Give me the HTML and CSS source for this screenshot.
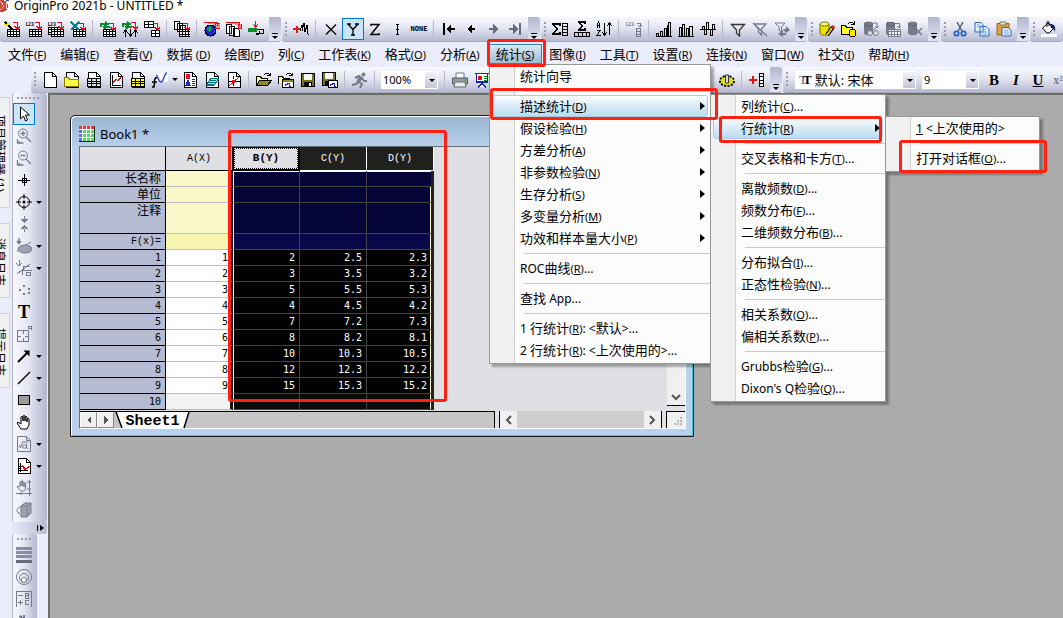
FILE: index.html
```html
<!DOCTYPE html>
<html lang="zh-CN">
<head>
<meta charset="utf-8">
<title>OriginPro 2021b - UNTITLED *</title>
<link rel="stylesheet" href="styles.css">
</head>
<body>
<svg class="defs" width="0" height="0" aria-hidden="true">
  <defs>
    <g id="grid"><path d="M0 0h13v8H0z" fill="#fff"/><path d="M.5.5h12v7H.5zM.5 2.500h12M.5 5.500h12M3.500.5v7M6.500.5v7M9.500.5v7" fill="none" stroke="currentColor"/></g>
    <path id="redarrow" d="M0 .5h4.500v5M2 4l2.500 3L7 4" fill="none" stroke="#e81010" stroke-width="1.500"/>
    <g id="page"><path d="M2.500.5h8l4 4v11h-12z" fill="#fff" stroke="currentColor"/><path d="M10.500.5v4h4" fill="none" stroke="currentColor"/></g>
    <g id="db"><path d="M1 3v9c0 3 9 3 9 0V3z" fill="currentColor"/><ellipse cx="5.500" cy="3" rx="4.500" ry="2" fill="currentColor" stroke="#555" stroke-width=".6"/></g>
    <g id="floppy"><path d="M.5.5h13v13H.5z" fill="#77751c" stroke="#000"/><path d="M3 1h8v6H3z" fill="#f5f5f5"/><path d="M3 9h8v5H3z" fill="#000"/><path d="M8 10h2v3H8z" fill="#fff"/></g>
    <g id="openfold"><path d="M.5 13.500v-9h4l1 2h6v2" fill="#ffff8a" stroke="#000"/><path d="M.5 13.500l3-5h12l-4 5z" fill="#8c8a20" stroke="#000"/><path d="M8 3c2-3 4-2 6 0m0-2.500V3h-3" fill="none" stroke="#000"/></g>
  </defs>
</svg>

<header class="titlebar">
  <svg class="logo" viewBox="0 0 9 14"><circle cx="2" cy="6" r="6" fill="#c94a3c"/><path d="M0 1l4 5-4 4M6 0l1 9" stroke="#f4c9c0" fill="none"/><path d="M6 0h3v9" stroke="#3b4a9a" fill="none"/></svg>
  <h1>OriginPro 2021b - UNTITLED *</h1>
</header>

<div class="row row-top">
  <div class="bar bar-first">
    <button class="tb"><svg viewBox="0 0 16 16"><use href="#grid" x="3" y="8"/><path d="M1 1l8 8" stroke="#000" stroke-width="1.500"/><path d="M0 3h6M3 0v6M1 6l5-5" stroke="#f0e000"/><use href="#redarrow" x="9" y="1"/></svg></button>
    <button class="tb"><svg viewBox="0 0 16 16"><text x="-1" y="5">123</text><use href="#grid" x="3" y="8"/><use href="#redarrow" x="9" y="1"/></svg></button>
    <button class="tb"><svg viewBox="0 0 16 16"><text x="-1" y="5">123</text><use href="#grid" x="0" y="6"/><use href="#grid" x="3" y="8"/><use href="#redarrow" x="9" y="1"/></svg></button>
    <button class="tb"><svg viewBox="0 0 16 16"><use href="#grid" x="3" y="8"/><path d="M1 1l8 8M9 1L1 9" stroke="#08808c" stroke-width="2"/><use href="#redarrow" x="9" y="2"/></svg></button>
    <i class="sep"></i>
    <button class="tb"><svg viewBox="0 0 16 16"><use href="#grid" x="3" y="8"/><path d="M1 6V3h6M5 1l3 2-3 2M10 6H4M6 4L4 6l2 2" stroke="#0a8a2a" fill="none" stroke-width="1.500"/><use href="#redarrow" x="9" y="2"/></svg></button>
    <button class="tb"><svg viewBox="0 0 16 16"><path d="M1 6V3h6M5 1l3 2-3 2M10 6H4M6 4L4 6l2 2" stroke="#0a8a2a" fill="none" stroke-width="1.500"/><path d="M3.500 16V9M1 12l2.500-3L6 12M8.500 8v7M6 12l2.500 3 2.500-3M13.500 16V9M11 12l2.500-3 2.500 3" stroke="#000" fill="none"/><use href="#redarrow" x="9" y="1"/></svg></button>
    <button class="tb"><svg viewBox="0 0 16 16"><path d="M.5.5h9v6h-9zM.5 3.500h9M4.500.5v6M7.500 9.500h8v6h-8zM7.500 12.500h8M11.500 9.500v6" fill="#fff" stroke="#000"/><use href="#redarrow" x="9" y="2"/></svg></button>
    <i class="sep"></i>
    <button class="tb"><svg viewBox="0 0 16 16"><path d="M.5.5h5v8h-5zM3.500 2.500h5v8h-5zM6.500 4.500h5v9h-5z" fill="#fff" stroke="#000"/><use href="#grid" x="5" y="8"/><use href="#redarrow" x="9" y="2"/></svg></button>
    <i class="sep"></i>
    <button class="tb"><svg viewBox="0 0 16 16"><circle cx="6.500" cy="9.500" r="5.500" fill="#1728c8" stroke="#000"/><path d="M3 6l4-1 1 3-3 3-2-2zM8 11l3-1-1 3z" fill="#1e9a48"/><path d="M0 1.500h13v3M11 2v5h5V3z" stroke="#e81010" fill="#e81010" fill-opacity=".4"/></svg></button>
    <button class="tb"><svg viewBox="0 0 16 16"><path d="M.5 3.500h5v9h-5zM3.500 5.500h5v9h-5zM7.500 7.500h4l2 2v6h-6z" fill="#fff" stroke="#000"/><path d="M0 1.500h13v3M12 3v4h3V3" stroke="#e81010" fill="#e81010" fill-opacity=".4"/></svg></button>
    <button class="tb"><svg viewBox="0 0 16 16"><path d="M0 7h9v4H0z" fill="#0a8a2a"/><path d="M9 8.500h6.500v4h-4V10M11 13h-3" fill="none" stroke="#000" stroke-width="1.500"/><path d="M7.500 0v6M5 3l2.500 3L10 3" fill="none" stroke="#e81010"/></svg></button>
    <b class="more"></b>
  </div>
  <div class="bar">
    <i class="grip"></i>
    <button class="tb"><svg viewBox="0 0 16 16"><path d="M0 8h7M3.500 4.500v7" stroke="#e81010" stroke-width="2"/><path d="M7 10l2-6v6l2-8 1 9 2-7 1 9 1 1" fill="none" stroke="#000"/></svg></button>
    <i class="sep"></i>
    <button class="tb"><svg class="smooth" viewBox="0 0 16 16"><path d="M3 3.500l10 10M13 3.500l-10 10" stroke="#000" stroke-width="1.300"/></svg></button>
    <button class="tb on"><svg class="smooth" viewBox="0 0 16 16"><path d="M3 3l5 5.500v5.500M13 3L8 8.500M2 3h4M10 3h4M6 14h4" fill="none" stroke="#000" stroke-width="1.300"/></svg></button>
    <button class="tb"><svg class="smooth" viewBox="0 0 16 16"><path d="M4 5V3.500h8L4 13.500h8V12" fill="none" stroke="#000" stroke-width="1.500"/></svg></button>
    <button class="tb"><svg viewBox="0 0 16 16"><path d="M8.500 3v11M7 3.500h3M7 13.500h3M7 8.500h3" stroke="#000"/></svg></button>
    <button class="tb none">NONE</button>
    <i class="sep"></i>
    <button class="tb"><svg viewBox="0 0 16 16"><path d="M3 2v12" stroke="#000" stroke-width="2"/><path d="M5 8l5-5v4h4v2h-4v4z"/></svg></button>
    <button class="tb"><svg viewBox="0 0 16 16"><path d="M4 8l5-5v4h3v2H9v4z"/></svg></button>
    <button class="tb"><svg viewBox="0 0 16 16"><path d="M13 8L8 3v4H4v2h4v4z" fill="#686b7c"/></svg></button>
    <button class="tb"><svg viewBox="0 0 16 16"><path d="M11 8L6 3v4H2v2h4v4z" fill="#686b7c"/><path d="M13 2v12" stroke="#686b7c" stroke-width="2"/></svg></button>
    <b class="more"></b>
  </div>
  <div class="bar">
    <i class="grip"></i>
    <button class="tb"><svg viewBox="0 0 16 16"><path d="M8 5V3H1l4 5-4 5h7v-2" fill="none" stroke="#000" stroke-width="1.500"/><path d="M10.500 2.500h5v12h-5zM10 5.500h6M10 8.500h6M10 11.500h6" fill="none" stroke="#000"/></svg></button>
    <button class="tb"><svg viewBox="0 0 16 16"><path d="M11 3V1H5l3 4-3 4h6V7" fill="none" stroke="#000" stroke-width="1.500"/><path d="M.5 11.500h15v4H.5zM4.500 11v4M8.500 11v4M12.500 11v4" fill="none" stroke="#000"/></svg></button>
    <button class="tb"><svg viewBox="0 0 16 16"><path d="M1.500 7V3l1-2 1 2v4M1 4.500h3M1 9.500h3l-3 5h4M8.500 2v12M6 11l2.500 3 2.500-3M13.500 14V2M11 5l2.500-3L16 5" fill="none" stroke="#000"/></svg></button>
    <i class="sep"></i>
    <button class="tb gray"><svg viewBox="0 0 16 16"><text x="-1" y="5">123</text><path d="M11 2h3v4M12 4l2 2 2-2M10.500 7.500h4v8h-4zM10 10.500h5M10 13h5" fill="none" stroke="currentColor"/></svg></button>
    <i class="sep"></i>
    <button class="tb"><svg viewBox="0 0 16 16"><path d="M.5 15v-3h2v3M4.500 15v-5h2v5M8.500 15V7h2v8M12.500 15V1h2v14M0 15.500h16M11 4v11" fill="none" stroke="#000"/></svg></button>
    <button class="tb"><svg viewBox="0 0 16 16"><path d="M1.500 15V6h2v9M4.500 15V3h2v12M8.500 15V7h2v8M11.500 15V5h3v10M0 15.500h16" fill="none" stroke="#000"/></svg></button>
    <button class="tb"><svg viewBox="0 0 16 16"><path d="M0 8.500h16M2.500 8V5h2v3M4.500 9v4h2V9M6.500 8V1h2v7M10.500 9v5h2V9M12.500 8V3h2v5" fill="none" stroke="#000"/></svg></button>
    <i class="sep"></i>
    <button class="tb"><svg class="smooth" viewBox="0 0 16 16"><path d="M1.500 3.500h13L9.500 9v6l-3-3V9z" fill="#e8eaf0" stroke="#333" stroke-width="1.300"/></svg></button>
    <button class="tb gray"><svg class="smooth" viewBox="0 0 16 16"><path d="M2 3h12L9.500 8v6l-3-3V8zM1 2l14 13" fill="none" stroke="currentColor" stroke-width="1.300"/></svg></button>
    <button class="tb gray"><svg class="smooth" viewBox="0 0 16 16"><path d="M1 2h10L7.500 6v5L5 9V6z" fill="none" stroke="currentColor"/><path d="M9 8h3V5l4 4-4 3zM12 12H9V9l-5 4 5 3v-2h3z" fill="currentColor"/></svg></button>
    <b class="more"></b>
  </div>
  <div class="bar">
    <i class="grip"></i>
    <button class="tb yellow"><svg class="smooth" viewBox="0 0 16 16"><path d="M1 3v9c0 3 9 3 9 0V3z" fill="#f0e000" stroke="#77700a"/><ellipse cx="5.500" cy="3" rx="4.500" ry="2" fill="#ffff80" stroke="#77700a"/><path d="M8 14l6-8" stroke="#000" stroke-width="4"/><path d="M8 14l5-7" stroke="#f5d400" stroke-width="2"/><path d="M13 7l2-2" stroke="#c22" stroke-width="3"/></svg></button>
    <button class="tb"><svg viewBox="0 0 16 16"><path d="M.5 13V4.500h4l1 2h6V9l-3 4z" fill="#ffff30" stroke="#000"/><path d="M7 3c2-3 4-2 6 0M13.500 0v3.500H10" fill="none" stroke="#000"/><path d="M8.500 10v4c0 2 6 2 6 0v-4c0-2-6-2-6 0" fill="#ffe800" stroke="#000"/></svg></button>
    <button class="tb gray"><svg class="smooth" viewBox="0 0 16 16"><use href="#db"/><path d="M10 2h4v5M12 5l2 2 2-2M10 9l3-2" fill="none" stroke="currentColor"/><circle cx="7" cy="12" r="2.500" fill="#ddd" stroke="currentColor"/><circle cx="13" cy="12" r="2.500" fill="#ddd" stroke="currentColor"/></svg></button>
    <button class="tb gray"><svg viewBox="0 0 16 16"><use href="#db"/><path d="M10 2h4v5M12 5l2 2 2-2" fill="none" stroke="currentColor"/><use href="#grid" x="3" y="8"/></svg></button>
    <button class="tb gray"><svg class="smooth" viewBox="0 0 16 16"><use href="#db"/><path d="M8 7l7 7M15 7l-7 7" fill="none" stroke="currentColor" stroke-width="1.500"/></svg></button>
    <b class="more"></b>
  </div>
  <div class="bar">
    <i class="grip"></i>
    <button class="tb"><svg class="smooth" viewBox="0 0 16 16"><path d="M5 1l5 9M11 1L6 10" stroke="#51606f" stroke-width="1.500"/><g fill="none" stroke="#2768c8" stroke-width="1.800"><circle cx="4.500" cy="12.500" r="2.200"/><circle cx="11.500" cy="12.500" r="2.200"/></g></svg></button>
    <button class="tb"><svg class="smooth" viewBox="0 0 16 16"><path d="M1 1.500h6l2 2V11H1zM6 5.500h6l3 3V15H6z" fill="#e4effc" stroke="#2e68b4"/><path d="M3 4h3M3 6h3M8 9h4M8 11h5M8 13h5" stroke="#76a4dc"/></svg></button>
    <button class="tb"><svg class="smooth" viewBox="0 0 16 16"><path d="M1 2.500h12V14H1z" fill="#dca23c" stroke="#9c6712"/><path d="M4 1h6v3H4z" fill="#eee2b8" stroke="#777"/><path d="M6 6.500h6l3 3V15H6z" fill="#eaf2fc" stroke="#2e68b4"/><path d="M8 9h4M8 11h5M8 13h5" stroke="#76a4dc"/></svg></button>
    <b class="more"></b>
  </div>
  <div class="bar bar-last">
    <i class="grip"></i>
    <button class="tb"><svg class="smooth" viewBox="0 0 16 16"><path d="M1.500 7L7 2l6 5-5 5H6z" fill="#fff" stroke="#000"/><path d="M6 6V1.500C6-.5 8-.5 8 1.500V5" fill="none" stroke="#000"/><path d="M9 3c4 0 6 2 5 8-1-3-2-4-4-4z" fill="#12205c"/><path d="M0 13h16v3H0z" fill="#fff"/></svg></button>
  </div>
</div>

<nav class="menubar">
  <button>文件<small>(<u>F</u>)</small></button><button>编辑<small>(<u>E</u>)</small></button><button>查看<small>(<u>V</u>)</small></button><button>数据 <small>(<u>D</u>)</small></button><button>绘图<small>(<u>P</u>)</small></button><button>列<small>(<u>C</u>)</small></button><button>工作表<small>(<u>K</u>)</small></button><button>格式<small>(<u>O</u>)</small></button><button>分析<small>(<u>A</u>)</small></button><button class="open">统计<small>(<u>S</u>)</small></button><button>图像<small>(<u>I</u>)</small></button><button>工具<small>(<u>T</u>)</small></button><button>设置<small>(<u>R</u>)</small></button><button>连接<small>(<u>N</u>)</small></button><button>窗口<small>(<u>W</u>)</small></button><button>社交<small>(<u>I</u>)</small></button><button>帮助<small>(<u>H</u>)</small></button>
</nav>

<div class="row row-second">
  <div class="bar">
    <i class="grip"></i>
    <button class="tb"><svg viewBox="0 0 16 16"><use href="#page"/></svg></button>
    <button class="tb"><svg viewBox="0 0 16 16"><use href="#page"/><path d="M.5 14.500v-9h4l1 2h9v7z" fill="#ffff40" stroke="#8a7a00"/></svg></button>
    <button class="tb"><svg viewBox="0 0 16 16"><use href="#page"/><path d="M1 6h14v9H1z"/><path d="M2 7h3v2H2zM6 7h4v2H6zM11 7h3v2h-3zM2 10h3v1H2zM6 10h4v1H6zM11 10h3v1h-3zM2 12h3v2H2zM6 12h4v2H6zM11 12h3v2h-3z" fill="#ddd"/></svg></button>
    <button class="tb"><svg viewBox="0 0 16 16"><use href="#page"/><path d="M4.500 3v10H13" stroke="#000" fill="none"/><path d="M5 11l3-4 2 2 3-4" stroke="#e81010" fill="none" stroke-width="1.300"/></svg></button>
    <button class="tb"><svg viewBox="0 0 16 16"><use href="#page"/><path d="M1 6h14v9H1z"/><path d="M2 7h3v2H2zM6 7h4v2H6zM11 7h3v2h-3zM2 10h3v1H2zM6 10h4v1H6zM11 10h3v1h-3zM2 12h3v2H2zM6 12h4v2H6zM11 12h3v2h-3z" fill="#ffff20"/></svg></button>
    <button class="tb"><svg class="smooth" viewBox="0 0 16 16"><path d="M3 1h13v9H3z" fill="#fff"/><path d="M4 3c2 0 2 7 5 7s3-9 6-9" stroke="#3448d8" stroke-width="1.500" fill="none"/><path d="M5 6c-3-1-2 3-3 9H0M0 10h5" stroke="#000" stroke-width="1.500" fill="none"/></svg></button>
    <i class="drop"></i>
    <button class="tb"><svg viewBox="0 0 16 16"><use href="#page"/><path d="M4 2h4v5H4z" fill="#e81010"/><path d="M4 13l2-5 2 5zM10 7h3M10 9h3M10 11h3M10 13h3" stroke="#1728c8" fill="#1728c8"/></svg></button>
    <button class="tb"><svg viewBox="0 0 16 16"><use href="#page"/><path d="M3 12l4-6h8l-4 6z" fill="#8fe8f0" stroke="#06717c"/><path d="M6 8h6M5 10h6M3 13.500h7" stroke="#06717c"/></svg></button>
    <button class="tb"><svg viewBox="0 0 16 16"><use href="#page"/><path d="M3 9.500h3M9 9.500h5M7.500 4v3M7.500 11v3" stroke="#000"/><path d="M3 14L13 5" stroke="#e81010"/><circle cx="7.500" cy="9.500" r="1.500" fill="#e81010"/></svg></button>
    <i class="sep"></i>
    <button class="tb"><svg viewBox="0 0 16 16"><use href="#openfold"/></svg></button>
    <button class="tb"><svg viewBox="0 0 16 16"><path d="M.5 12V4.500h4l1 2h6" fill="#ffff8a" stroke="#000"/><path d="M8 3c2-3 4-2 6 0m0-2.500V3h-3" fill="none" stroke="#000"/><path d="M4.500 7.500h11v8h-11z" fill="#fff" stroke="#000"/><path d="M5 8h10v2H5z" fill="#8c8a20"/><path d="M7 14v-2h2v-1h2v3h2" stroke="#22c" fill="none"/></svg></button>
    <button class="tb"><svg viewBox="0 0 16 16"><use href="#floppy" x="1" y="1"/></svg></button>
    <button class="tb"><svg viewBox="0 0 16 16"><use href="#floppy"/><path d="M6.500 8.500h9v7h-9z" fill="#fff" stroke="#000"/><path d="M8 14v-2h2v-1h2v3h2" stroke="#22c" fill="none"/></svg></button>
    <i class="sep"></i>
    <button class="tb gray"><svg class="smooth" viewBox="0 0 16 16"><circle cx="11.500" cy="2.500" r="2" fill="currentColor"/><path d="M3 6l4-2 3 2-3 4 3 2-2 4M7 10l-3 2-4 1M10 6l2 3h3M8 5l-3 5" stroke="currentColor" stroke-width="2" fill="none"/></svg></button>
    <i class="sep"></i>
    <label class="combo combo-zoom"><select aria-label="缩放"><option>100%</option></select></label>
    <i class="sep"></i>
    <button class="tb"><svg class="smooth" viewBox="0 0 16 16"><path d="M4 6V1h8v5" fill="#fff" stroke="#777"/><path d="M.5 6h15v6H.5z" fill="#999da5" stroke="#555"/><path d="M3 10h10l1 5H2z" fill="#eee" stroke="#666"/><path d="M12 8h2" stroke="#2a2"/></svg></button>
    <button class="tb"><svg viewBox="0 0 16 16"><path d="M1 1.500h14M2.500 2v8h11V2M8 10v3M4 15l4-3 4 3" fill="#fff" stroke="#1728a8" stroke-width="1.500"/><circle cx="6" cy="6" r="2.500" fill="#e81010"/><path d="M10 4h3M10 6h3M10 8h3" stroke="#0a8a2a"/></svg></button>
    <span class="covered"></span>
    <button class="tb"><svg class="smooth" viewBox="0 0 16 16"><ellipse cx="8" cy="9" rx="7" ry="5" fill="#e6d81c" stroke="#000" stroke-dasharray="2 1.400" stroke-width="2"/><ellipse cx="8" cy="9" rx="6" ry="4" fill="#e6d81c"/><path d="M6.500 3h3v8h-3z" fill="#ddd" stroke="#333"/></svg></button>
    <i class="sep"></i>
    <button class="tb"><svg viewBox="0 0 16 16"><path d="M0 8h8M4 4v8" stroke="#e81010" stroke-width="2"/><path d="M10.500 1.500h4v13h-4zM10 4.500h5M10 8h5M10 11.500h5" fill="#fff" stroke="#000"/></svg></button>
    <b class="more"></b>
  </div>
  <div class="bar bar-last">
    <i class="grip"></i>
    <label class="combo combo-font"><span class="tt"><s>T</s>T</span><select aria-label="字体"><option>默认: 宋体</option></select></label>
    <label class="combo combo-size"><select aria-label="字号"><option>9</option></select></label>
    <button class="tb fmt"><b>B</b></button>
    <button class="tb fmt"><em>I</em></button>
    <button class="tb fmt"><u>U</u></button>
    <button class="tb fmt sup">x²</button>
  </div>
</div>

<div class="workspace">
  <aside class="dock">
    <button class="dock-tab tall"><span>项目管理器 (1)</span></button>
    <button class="dock-tab"><span>消息日志</span></button>
    <button class="dock-tab"><span>提示日志</span></button>
  </aside>
  <aside class="tools">
    <div class="toolcol">
      <i class="hgrip"></i>
      <div class="tool"><button class="tb on"><svg class="smooth" viewBox="0 0 16 16"><path d="M4.500 1v12l3-3 2 5 2-1-2-5h4z" fill="#fff" stroke="#000"/></svg></button></div>
      <div class="tool"><button class="tb gray"><svg class="smooth" viewBox="0 0 16 16"><circle cx="7" cy="5.500" r="4.500" fill="none" stroke="currentColor"/><path d="M7 3v5M4.500 5.500h5M10 9l5 5M1.500 11v4h6M3.500 13v2" stroke="currentColor" fill="none" stroke-width="1.300"/></svg></button></div>
      <div class="tool"><button class="tb gray"><svg class="smooth" viewBox="0 0 16 16"><circle cx="7" cy="5.500" r="4.500" fill="none" stroke="currentColor"/><path d="M4.500 5.500h5M10 9l5 5M1.500 10v5h6M3.500 13v2" stroke="currentColor" fill="none" stroke-width="1.300"/></svg></button></div>
      <div class="tool"><button class="tb"><svg viewBox="0 0 16 16"><path d="M8.500 2v12M2 8.500h12M6.500 6.500h4v4h-4z" fill="none" stroke="#000"/></svg></button></div>
      <div class="tool"><button class="tb"><svg class="smooth" viewBox="0 0 16 16"><circle cx="8" cy="8" r="5.500" fill="none" stroke="#000"/><circle cx="8" cy="8" r="1.500"/><path d="M8 0v5M8 11v5M0 8h5M11 8h5" stroke="#000"/></svg></button><i class="drop"></i></div>
      <div class="tool"><button class="tb gray"><svg viewBox="0 0 16 16"><path d="M5 3h7L8.500 7zM5 13h7L8.500 9zM8 0h1v4H8zM8 12h1v4H8z" fill="currentColor"/></svg></button></div>
      <div class="tool"><button class="tb gray"><svg class="smooth" viewBox="0 0 16 16"><path d="M1 14C4 9 8 8 15 4" stroke="currentColor" fill="none"/><ellipse cx="9" cy="11" rx="7" ry="4" fill="#9da1b2" stroke="currentColor"/><path d="M3 0v5M1 3l2 2.500L5 3" fill="none" stroke="currentColor" stroke-width="1.500"/></svg></button><i class="drop"></i></div>
      <div class="tool"><button class="tb gray"><svg viewBox="0 0 16 16"><path d="M3 0v5M0 3l3 3 3-3M1 14L14 4M6.500 15v-5h9M7 9V6h6M10 12h4v3h-4z" fill="none" stroke="currentColor"/></svg></button><i class="drop"></i></div>
      <div class="tool"><button class="tb gray"><svg viewBox="0 0 16 16"><path d="M7 3h2v2H7zM3 7h2v2H3zM12 6h2v2h-2zM12 10h2v2h-2zM7 11h2v2H7z" fill="currentColor"/></svg></button></div>
      <div class="tool"><button class="tb text-tool">T</button></div>
      <div class="tool"><button class="tb gray"><svg viewBox="0 0 16 16"><path d="M1.500 4.500h11v11h-11zM7 4v4M7 12v4M1 10h4M9 10h4M12.500 3V.5h3V4M12 2.500h4" fill="none" stroke="currentColor"/></svg></button></div>
      <div class="tool"><button class="tb"><svg class="smooth" viewBox="0 0 16 16"><path d="M2 14L11 5" stroke="#000" stroke-width="2"/><path d="M13.500 2.500v6l-6-6z"/></svg></button><i class="drop"></i></div>
      <div class="tool"><button class="tb"><svg class="smooth" viewBox="0 0 16 16"><path d="M2 14L14 2" stroke="#000" stroke-width="1.500"/></svg></button><i class="drop"></i></div>
      <div class="tool"><button class="tb"><svg viewBox="0 0 16 16"><path d="M2.500 3.500h11v9h-11z" fill="#9b9b9b" stroke="#000"/></svg></button><i class="drop"></i></div>
      <div class="tool"><button class="tb"><svg class="smooth" viewBox="0 0 16 16"><path d="M5 15L1 9l1-1 3 2V3q1-1 2 0v4-5q1-1 2 0v5-4q1-1 2 0v5-3q1-1 2 0v6l-2 4z" fill="#fff" stroke="#000"/></svg></button></div>
      <div class="tool"><button class="tb gray"><svg class="smooth" viewBox="0 0 16 16"><path d="M1.500.5h9l4 4v11h-13zM10.500.5v4h4M3 9l1.500 3 2-6h6" fill="none" stroke="currentColor"/><circle cx="8.500" cy="10.500" r="1.800" fill="none" stroke="currentColor"/><path d="M10.500 8v4l1.500.5" fill="none" stroke="currentColor"/></svg></button><i class="drop"></i></div>
      <div class="tool"><button class="tb"><svg viewBox="0 0 16 16"><use href="#page"/><path d="M4.500 5v9M3 12.500h9M4 8H2M4 10H2" stroke="#000"/><path d="M5 9q2-2 3 1t5-2" stroke="#e81010" fill="none" stroke-width="1.500"/></svg></button><i class="drop"></i></div>
      <div class="tool"><button class="tb gray"><svg class="smooth" viewBox="0 0 16 16"><path d="M5 11L1 7l1-1 2 1V2h1v4-5h1.500v5-4H8v5-4h1.500v6L8 11zM13.500 0v16M0 13.500h16M11 2h4M11 9h4M5 12v3" fill="none" stroke="currentColor"/></svg></button></div>
      <div class="tool"><button class="tb gray"><svg class="smooth" viewBox="0 0 16 16"><path d="M5 4l4-3h6v10l-4 4H5z" fill="#9da1b2" stroke="currentColor"/><path d="M5 4h6v11M11 4l4-3M4 5C0 7 0 10 4 12M2 10l2 2" fill="none" stroke="currentColor"/></svg></button></div>
    </div>
    <div class="tools-more"></div>
    <div class="toolcol narrow">
      <i class="hgrip"></i>
      <div class="tool"><button class="tb"><svg viewBox="0 0 16 16"><path d="M0 1.500h16M0 5.500h16M0 9.500h16" stroke="#8a8da0" stroke-width="3"/><path d="M0 14h16" stroke="#686b7c" stroke-width="3"/></svg></button></div>
      <div class="tool"><button class="tb gray"><svg class="smooth" viewBox="0 0 16 16"><circle cx="8" cy="8" r="7.500" fill="none" stroke="currentColor"/><circle cx="8" cy="9" r="4.500" fill="none" stroke="currentColor"/><circle cx="8" cy="11" r="2.500" fill="#fff" stroke="currentColor"/></svg></button></div>
      <div class="tool"><button class="tb gray"><svg viewBox="0 0 16 16"><path d="M.5 0v16M0 .5h16M15.500 0v16M2 4.500h5M2 11.500h5M4.500 9v5M9.500 2v5h3V2zM9 4.500h4M13 9.500H9.500v4H13" fill="none" stroke="currentColor"/></svg></button></div>
      <div class="tool"><button class="tb gray"><svg viewBox="0 0 16 16"><path d="M8 2v12M2 6.500h12M4 3l8 8" stroke="currentColor" stroke-width="1.500"/></svg></button></div>
    </div>
  </aside>

  <main class="mdi">
    <section class="book">
      <h2 class="book-title">
        <svg viewBox="0 0 16 16"><path d="M0 0h16v16H0z" fill="#222"/><path d="M0 0h15v15H0z" fill="#fff"/><path d="M0 0h15v4H0z" fill="#f03040"/><path d="M0 4h4v11H0z" fill="#5a70e8"/><path d="M4 4h11v11H4z" fill="#50dc68"/><path d="M3.500 0v15M7.500 0v15M11.500 0v15M0 3.500h15M0 7.500h15M0 11.500h15" stroke="#fff"/></svg>
        Book1 *
      </h2>
      <div class="client">
        <div class="sheet-area">
          <div class="sheet-clip">
            <table class="sheet">
              <colgroup><col class="c-head"><col class="c-data"><col class="c-data"><col class="c-data"><col class="c-data"></colgroup>
              <thead><tr><th></th><th>A(X)</th><th class="active"><span>B(Y)</span></th><th class="sel">C(Y)</th><th class="sel">D(Y)</th></tr></thead>
              <tbody>
                <tr class="meta first"><th>长名称</th><td></td><td></td><td></td><td></td></tr>
                <tr class="meta"><th>单位</th><td></td><td></td><td></td><td></td></tr>
                <tr class="meta note"><th>注释</th><td></td><td></td><td></td><td></td></tr>
                <tr class="meta fx"><th>F(x)=</th><td></td><td></td><td></td><td></td></tr>
                <tr><th>1</th><td>1</td><td>2</td><td>2.5</td><td>2.3</td></tr>
                <tr><th>2</th><td>2</td><td>3</td><td>3.5</td><td>3.2</td></tr>
                <tr><th>3</th><td>3</td><td>5</td><td>5.5</td><td>5.3</td></tr>
                <tr><th>4</th><td>4</td><td>4</td><td>4.5</td><td>4.2</td></tr>
                <tr><th>5</th><td>5</td><td>7</td><td>7.2</td><td>7.3</td></tr>
                <tr><th>6</th><td>6</td><td>8</td><td>8.2</td><td>8.1</td></tr>
                <tr><th>7</th><td>7</td><td>10</td><td>10.3</td><td>10.5</td></tr>
                <tr><th>8</th><td>8</td><td>12</td><td>12.3</td><td>12.2</td></tr>
                <tr><th>9</th><td>9</td><td>15</td><td>15.3</td><td>15.2</td></tr>
                <tr class="blank"><th>10</th><td></td><td></td><td></td><td></td></tr>
              </tbody>
            </table>
          </div>
          <div class="vscroll"><svg viewBox="0 0 10 8"><path d="M1 2l4 4 4-4" fill="none" stroke="#555" stroke-width="2"/></svg></div>
        </div>
        <div class="bottom">
          <div class="tabs">
            <button class="nav" aria-label="上一个"><svg viewBox="0 0 6 8"><path d="M5 0v8L1 4z" fill="#555"/></svg></button>
            <button class="nav" aria-label="下一个"><svg viewBox="0 0 6 8"><path d="M1 0v8l4-4z" fill="#555"/></svg></button>
            <div class="tab"><svg viewBox="0 0 75 16"><path d="M1 0l6 16h62l5-16z" fill="#fff"/><path d="M1 0l6 16M69 16l5-16" stroke="#000" stroke-width="1.500" fill="none"/></svg><button>Sheet1</button></div>
          </div>
          <div class="hscroll"><svg viewBox="0 0 8 10"><path d="M6 1L2 5l4 4" fill="none" stroke="#555" stroke-width="2"/></svg><i></i><svg viewBox="0 0 8 10"><path d="M2 1l4 4-4 4" fill="none" stroke="#555" stroke-width="2"/></svg></div>
          <div class="corner"><svg viewBox="0 0 9 9"><path d="M6 0h2v2H6zM3 3h2v2H3zM6 3h2v2H6zM0 6h2v2H0zM3 6h2v2H3zM6 6h2v2H6z" fill="#b8b8b8"/></svg></div>
        </div>
      </div>
    </section>
  </main>
</div>

<div class="menu menu-stat" role="menu">
  <button>统计向导</button>
  <hr>
  <button class="hot sub">描述统计<small>(<u>D</u>)</small></button>
  <button class="sub">假设检验<small>(<u>H</u>)</small></button>
  <button class="sub">方差分析<small>(<u>A</u>)</small></button>
  <button class="sub">非参数检验<small>(<u>N</u>)</small></button>
  <button class="sub">生存分析<small>(<u>S</u>)</small></button>
  <button class="sub">多变量分析<small>(<u>M</u>)</small></button>
  <button class="sub">功效和样本量大小<small>(<u>P</u>)</small></button>
  <hr>
  <button><span>ROC</span>曲线<small>(<u>R</u>)</small><span>...</span></button>
  <hr>
  <button>查找<span>&nbsp;App...</span></button>
  <hr>
  <button><span>1&nbsp;</span>行统计<small>(<u>R</u>)</small><span>: &lt;</span>默认<span>&gt;...</span></button>
  <button><span>2&nbsp;</span>行统计<small>(<u>R</u>)</small><span>: &lt;</span>上次使用的<span>&gt;...</span></button>
</div>

<div class="menu menu-desc" role="menu">
  <button>列统计<small>(<u>C</u>)</small><span>...</span></button>
  <button class="hot sub">行统计<small>(<u>R</u>)</small></button>
  <hr>
  <button>交叉表格和卡方<small>(<u>T</u>)</small><span>...</span></button>
  <hr>
  <button>离散频数<small>(<u>D</u>)</small><span>...</span></button>
  <button>频数分布<small>(<u>F</u>)</small><span>...</span></button>
  <button>二维频数分布<small>(<u>B</u>)</small><span>...</span></button>
  <hr>
  <button>分布拟合<small>(<u>I</u>)</small><span>...</span></button>
  <button>正态性检验<small>(<u>N</u>)</small><span>...</span></button>
  <hr>
  <button>相关系数<small>(<u>O</u>)</small><span>...</span></button>
  <button>偏相关系数<small>(<u>P</u>)</small><span>...</span></button>
  <hr>
  <button><span>Grubbs</span>检验<small>(<u>G</u>)</small><span>...</span></button>
  <button><span>Dixon's Q</span>检验<small>(<u>Q</u>)</small><span>...</span></button>
</div>

<div class="menu menu-rows" role="menu">
  <button><span><u>1</u> &lt;</span>上次使用的<span>&gt;</span></button>
  <hr>
  <button>打开对话框<small>(<u>O</u>)</small><span>...</span></button>
</div>

<i class="mark mark-menu"></i>
<i class="mark mark-desc"></i>
<i class="mark mark-row"></i>
<i class="mark mark-dialog"></i>
<i class="mark mark-data"></i>
</body>
</html>
```
FILE: styles.css
```css
* { box-sizing: border-box; }

body {
  margin: 0;
  height: 100vh;
  overflow: hidden;
  position: relative;
  display: flex;
  flex-direction: column;
  background: #ebedfb;
  color: #000;
  font: 13px/16px "Noto Sans", "Noto Sans CJK SC", sans-serif;
}

button {
  margin: 0;
  padding: 0;
  border: 0;
  background: none;
  color: inherit;
  font: inherit;
}

svg { display: block; shape-rendering: crispEdges; }
svg text { font: bold 5px "DejaVu Sans Mono", monospace; fill: currentColor; }
.smooth { shape-rendering: auto; }
.defs { position: absolute; }

/* Title */
.titlebar {
  display: flex;
  flex: none;
  height: 17px;
  background: #fff;
}
.logo { width: 9px; height: 14px; margin-right: 5px; }
.titlebar h1 {
  margin: 0;
  font: 12px/12px "Noto Sans", sans-serif;
  white-space: nowrap;
}

/* Toolbars */
.row { display: flex; flex: none; gap: 1px; overflow: hidden; }
.row-top { height: 25px; }
.row-second { height: 26px; padding-left: 31px; }

.bar {
  display: flex;
  flex: none;
  align-items: center;
  height: 100%;
  border-bottom: 1px solid #a9abc4;
  border-radius: 3px;
  background: linear-gradient(#f8f9fe, #e4e6f2 45%, #b7b9d0);
}
.bar-first { padding-left: 1px; }
.bar-last { flex: 1 0 auto; }

.tb {
  display: flex;
  flex: none;
  align-items: center;
  justify-content: center;
  width: 22px;
  height: 22px;
}
.row-second .tb { height: 23px; padding-top: 1px; }
.tb svg { width: 16px; height: 16px; }
.tb.on { border: 1px solid #0078d7; background: #cce4f7; }
.gray { color: #777a8c; }
.none { font: bold 7px/8px "DejaVu Sans Mono", monospace; }

.grip {
  flex: none;
  width: 2px;
  height: 15px;
  margin: 0 3px;
  background: repeating-linear-gradient(#9a9cab 0 2px, transparent 2px 4px);
}
.sep {
  flex: none;
  width: 1px;
  height: 18px;
  margin: 0 4px 0 3px;
  background: #b9bac6;
}
.more {
  position: relative;
  flex: none;
  align-self: stretch;
  width: 12px;
  margin-left: 2px;
  border-radius: 0 3px 3px 0;
  background: linear-gradient(#b4b6cf, #e4e6f4);
}
.more::before, .more::after {
  content: "";
  position: absolute;
  left: 3px;
  bottom: 7px;
  width: 6px;
  height: 1px;
  background: #000;
}
.more::after {
  bottom: 2px;
  width: 0;
  height: 0;
  border: 3px solid transparent;
  border-bottom: 0;
  border-top-color: #000;
  background: none;
}
.drop {
  flex: none;
  width: 0;
  border: 3px solid transparent;
  border-top-color: #000;
  border-bottom: 0;
  margin: 0 1px;
}
.covered { flex: none; width: 223px; align-self: stretch; }

.combo {
  position: relative;
  display: flex;
  flex: none;
  align-items: center;
  height: 18px;
  background: #fff;
}
.combo::after {
  content: "";
  position: absolute;
  right: 3px;
  top: 8px;
  border: 3px solid transparent;
  border-top-color: #000;
  border-bottom: 0;
  pointer-events: none;
}
.combo select {
  flex: 1;
  min-width: 0;
  height: 16px;
  margin: 0 1px 0 0;
  padding: 0 12px 0 2px;
  border: 0;
  appearance: none;
  background: linear-gradient(#f2f3f8, #c3c5d8) right / 12px 100% no-repeat #fff;
  color: #000;
  font: 11px/16px "Noto Sans", "Noto Sans CJK SC", sans-serif;
}
.combo-zoom { width: 57px; margin: 0 3px 0 2px; }
.combo-font { width: 121px; margin: 0 6px 0 4px; }
.combo-font select { padding-left: 0; font-size: 13px; }
.combo-size { width: 57px; margin-right: 4px; }
.tt {
  margin: 0 3px 0 4px;
  font: bold 13px/16px "Liberation Serif", serif;
}
.tt s { margin-right: -4px; color: #888; font-size: 12px; text-decoration: none; }
.fmt { font: bold 15px/18px "Liberation Serif", serif; }
.sup { width: 18px; color: #777a8c; font-size: 12px; }

/* Menu bar */
.menubar {
  display: flex;
  flex: none;
  align-items: flex-start;
  height: 25px;
  padding: 2px 0 0 1px;
}
.menubar button {
  flex: none;
  height: 20px;
  padding: 0 7px;
  line-height: 20px;
  white-space: nowrap;
}
.menubar .open {
  margin-left: 1px;
  border: 1px solid #3c7fb1;
  padding: 0 7px;
  background: linear-gradient(#dbe9f3, #9dbdd3);
  line-height: 18px;
}
small { font-size: 11px; }
u { text-underline-offset: 1px; }

/* Workspace */
.workspace { display: flex; flex: 1; min-height: 0; }

.dock {
  display: flex;
  flex: none;
  flex-direction: column;
  gap: 15px;
  width: 12px;
  padding-top: 4px;
  overflow: hidden;
}
.dock-tab {
  display: flex;
  flex: none;
  justify-content: flex-end;
  width: 10px;
  height: 75px;
  padding: 3px 4px 0 0;
  border: 1px solid #d2d2d8;
  border-left: 0;
  background: #f1f1f2;
  overflow: hidden;
}
.dock-tab.tall { height: 111px; }
.dock-tab span {
  writing-mode: vertical-rl;
  text-orientation: sideways;
  font-size: 12px;
  line-height: 12px;
  white-space: nowrap;
}

.tools {
  display: flex;
  flex: none;
  flex-direction: column;
  align-items: flex-start;
  width: 36px;
  overflow: hidden;
}
.toolcol {
  flex: none;
  width: 35px;
  padding-bottom: 1px;
  border-left: 1px solid #b3b5ca;
  border-radius: 3px;
  background: linear-gradient(90deg, #f8f9fe, #e4e6f2 45%, #b4b6ce);
}
.narrow { width: 25px; }
.tool { display: flex; align-items: center; height: 22px; }
.hgrip {
  display: block;
  width: 22px;
  height: 2px;
  margin: 4px;
  background: repeating-linear-gradient(90deg, #9a9cab 0 2px, transparent 2px 4px);
}
.narrow .hgrip { width: 14px; }
.text-tool { font: bold 18px/20px "Liberation Serif", serif; }
.tools-more {
  position: relative;
  flex: none;
  width: 35px;
  height: 12px;
  border-radius: 0 0 3px 0;
  background: linear-gradient(90deg, #e8eaf8, #b9bbd3);
}
.tools-more::before {
  content: "";
  position: absolute;
  right: 3px;
  top: 3px;
  border: 3px solid transparent;
  border-left: 4px solid #000;
  border-right: 0;
}
.tools-more::after {
  content: "";
  position: absolute;
  right: 9px;
  top: 3px;
  width: 1px;
  height: 6px;
  background: #000;
}

.mdi {
  position: relative;
  flex: 1;
  min-width: 0;
  border: solid #6d6d68;
  border-width: 2px 0 0 2px;
  background: #ababab;
}

/* Workbook */
.book {
  position: absolute;
  left: 20px;
  top: 20px;
  display: flex;
  flex-direction: column;
  width: 624px;
  height: 322px;
  padding: 1px 7px 7px 8px;
  border: 1px solid #181820;
  border-radius: 5px 5px 0 0;
  box-shadow: inset 1px 1px #fff, inset -1px -1px #38c8dc;
  background: linear-gradient(#99b4d3, #b9d1ea 32px, #b9d1ea);
}
.book-title {
  display: flex;
  flex: none;
  align-items: center;
  gap: 5px;
  height: 29px;
  margin: 0;
  padding: 5px 0 0;
  font: 13px/16px "Noto Sans", sans-serif;
}
.book-title svg { width: 16px; height: 16px; }
.client {
  display: flex;
  flex: 1;
  flex-direction: column;
  min-height: 0;
  border: 1px solid #6d6d6d;
  border-right-color: #fff;
  border-bottom-color: #fff;
  background: #e0dfe4;
}
.sheet-area { display: flex; flex: 1; min-height: 0; }
.sheet-clip { flex: 1; min-width: 0; overflow: hidden; }
.vscroll {
  display: flex;
  flex: none;
  align-items: flex-end;
  justify-content: center;
  width: 18px;
  margin-bottom: 5px;
  padding-bottom: 4px;
  border-bottom: 1px solid #000;
  background: #f0f0f0;
}
.vscroll svg { width: 10px; height: 8px; shape-rendering: auto; }

.sheet {
  width: 354px;
  table-layout: fixed;
  border-collapse: separate;
  border-spacing: 0;
  font: 10px/15px "DejaVu Sans Mono", "Noto Sans CJK SC", monospace;
}
.c-head { width: 86px; }
.c-data { width: 67px; }
.sheet th, .sheet td {
  height: 16px;
  padding: 0 4px 0 0;
  border-right: 1px solid #444;
  border-bottom: 1px solid #444;
  text-align: right;
  font-weight: normal;
  line-height: 15px;
  vertical-align: top;
}
.sheet thead th {
  height: 24px;
  padding: 1px 0 0;
  border-color: #000;
  background: #e0dfe4;
  font: 10px/22px "Liberation Mono", monospace;
  text-align: center;
}
.sheet thead .sel { background: #20211c; color: #fff; border-color: #fff; }
.sheet thead .active { padding: 1px; background: #000; font-size: 11px; font-weight: bold; }
.active span {
  display: block;
  border: 1px dotted #fff;
  background: #e0dfe4;
  background-clip: padding-box;
  line-height: 19px;
}
.sheet tbody th {
  border-color: #000;
  padding-right: 4px;
  background: #b5bbd3;
}
.sheet .meta th { padding-top: 1px; font-size: 12px; line-height: 14px; }
.sheet .fx th { font: 10px/14px "Liberation Mono", monospace; }
.sheet td:nth-child(2) { background: #fff; border-color: #c0c0c0; border-right: 3px solid #111; padding-right: 2px; }
.sheet td:nth-child(n+3) { background: #000; color: #fff; }
.sheet .meta td:nth-child(2) { background: #faf7ca; }
.sheet .meta td:nth-child(n+3) { background: #040436; }
.sheet .fx td:nth-child(2) { background: #f6f4ae; }
.sheet .fx td:nth-child(n+3) { background: #080848; }
.sheet .note td, .sheet .note th { height: 31px; }
.sheet .blank td:nth-child(2) { background: #f2f2f2; }
.sheet .blank td:nth-child(n+3) { background: #0a0a0a; }
.sheet tbody td:nth-child(3) { border-left: 1px solid #ffffd0; }
.sheet tbody td:nth-child(5) { border-right: 3px solid #20201c; box-shadow: inset -1px 0 #ffffd0; }
.sheet .first td:nth-child(n+3) { box-shadow: inset 0 1px #ffffd0; }

.bottom { display: flex; flex: none; height: 17px; background: #e0dfe4; }
.tabs {
  display: flex;
  flex: 1;
  border-top: 1px solid #000;
  border-right: 1px solid #000;
  background: #c6c6c6;
}
.nav {
  display: flex;
  align-items: center;
  justify-content: center;
  width: 17px;
  border: 1px solid #888;
  border-top-color: #fff;
  border-left-color: #fff;
  background: #f0f0f0;
}
.nav svg { width: 6px; height: 8px; }
.tab { position: relative; width: 75px; margin-left: 1px; }
.tab svg { position: absolute; inset: 0; width: 75px; height: 16px; shape-rendering: auto; }
.tab button {
  position: relative;
  width: 75px;
  font: bold 15px/16px "Liberation Mono", monospace;
}
.hscroll {
  display: flex;
  flex: none;
  align-items: center;
  gap: 4px;
  width: 163px;
  margin: 0 4px;
  padding: 0 5px;
  border: solid #000;
  border-width: 0 1px;
  background: #f0f0f0;
}
.hscroll svg { width: 8px; height: 10px; shape-rendering: auto; }
.hscroll i { flex: 1; align-self: stretch; background: #cdcdcd; }
.corner {
  display: flex;
  flex: none;
  align-items: flex-end;
  justify-content: flex-end;
  width: 19px;
  padding: 2px;
  border: solid #000;
  border-width: 1px 0 0 1px;
  background: #f0f0f0;
}
.corner svg { width: 9px; height: 9px; }

/* Pop-up menus */
.menu {
  position: absolute;
  display: flex;
  flex-direction: column;
  padding-bottom: 2px;
  border: 1px solid #979797;
  background: linear-gradient(90deg, #f1f1f1 24px, #cfcfcf 24px 25px, #fcfcfc 25px);
  box-shadow: 3px 3px 2px rgba(0, 0, 0, .3);
}
.menu-stat { left: 489px; top: 64px; width: 222px; }
.menu-desc { left: 710px; top: 94px; width: 176px; }
.menu-rows { left: 885px; top: 116px; width: 155px; }
.menu button {
  position: relative;
  height: 22px;
  margin: 0 2px;
  padding-left: 28px;
  border-radius: 3px;
  line-height: 22px;
  text-align: left;
  white-space: nowrap;
}
.menu span { font-size: 12px; }
.menu hr {
  width: calc(100% - 34px);
  height: 1px;
  margin: 4px 0 3px 34px;
  border: 0;
  background: #cbcbcb;
}
.menu .hot {
  border: 1px solid #a8cbe4;
  padding-left: 27px;
  background: linear-gradient(#fbfdfe, #d9ebf7 50%, #b9dcf2);
  line-height: 20px;
}
.menu .sub::after {
  content: "";
  position: absolute;
  right: 3px;
  top: 7px;
  border: 4px solid transparent;
  border-left: 5px solid #000;
  border-right: 0;
}
.menu .hot::after { right: 2px; top: 6px; }

/* Highlight frames */
.mark {
  position: absolute;
  border: 3px solid #ff2212;
  border-radius: 3px;
  pointer-events: none;
}
.mark-menu { left: 487px; top: 39px; width: 59px; height: 28px; }
.mark-desc { left: 490px; top: 88px; width: 228px; height: 32px; }
.mark-row { left: 719px; top: 116px; width: 163px; height: 27px; }
.mark-dialog { left: 899px; top: 140px; width: 148px; height: 33px; }
.mark-data { left: 228px; top: 130px; width: 219px; height: 272px; }
```
